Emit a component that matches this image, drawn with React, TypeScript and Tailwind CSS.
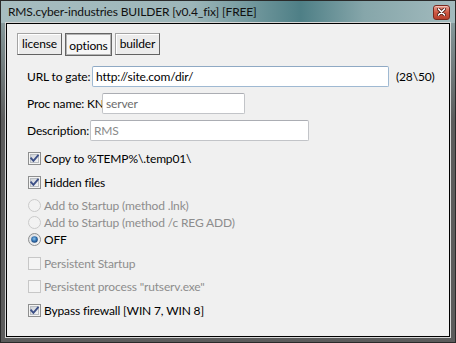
import React from "react";

const font = { fontFamily: 'Lato, "Liberation Sans", Arial, sans-serif' };

function CheckBox({ checked = false, disabled = false }: { checked?: boolean; disabled?: boolean }) {
  return (
    <svg width="13" height="13" viewBox="0 0 13 13" className="shrink-0">
      <defs>
        <linearGradient id="cbInner" x1="0" y1="0" x2="1" y2="1">
          <stop offset="0" stopColor="#cbcfd5" />
          <stop offset="1" stopColor="#f7f7f7" />
        </linearGradient>
      </defs>
      <rect x="0.5" y="0.5" width="12" height="12" fill="#f4f4f4" stroke={disabled ? "#c7c7c7" : "#8e8f8f"} />
      {!disabled && <rect x="2.5" y="2.5" width="8" height="8" fill="url(#cbInner)" stroke="#b9bdc2" />}
      {checked && (
        <path d="M3.2 6.4 L5.4 8.9 L9.9 3.6" stroke="#3c4f86" strokeWidth="1.9" fill="none" strokeLinecap="square" />
      )}
    </svg>
  );
}

function Radio({ checked = false, disabled = false }: { checked?: boolean; disabled?: boolean }) {
  return (
    <svg width="13" height="13" viewBox="0 0 13 13" className="shrink-0">
      <defs>
        <radialGradient id="rbDot" cx="0.45" cy="0.4" r="0.6">
          <stop offset="0" stopColor="#8fc6ee" />
          <stop offset="0.6" stopColor="#2f6fae" />
          <stop offset="1" stopColor="#1c4478" />
        </radialGradient>
        <linearGradient id="rbBg" x1="0" y1="0" x2="1" y2="1">
          <stop offset="0" stopColor="#d8dbe0" />
          <stop offset="1" stopColor="#f8f8f8" />
        </linearGradient>
      </defs>
      <circle cx="6.5" cy="6.5" r="6" fill={disabled ? "#f2f2f2" : "url(#rbBg)"} stroke={disabled ? "#cacaca" : "#8e8f8f"} />
      {checked && <circle cx="6.5" cy="6.5" r="3.3" fill="url(#rbDot)" />}
    </svg>
  );
}

function Option({
  kind,
  label,
  checked,
  disabled,
  className,
}: {
  kind: "check" | "radio";
  label: string;
  checked?: boolean;
  disabled?: boolean;
  className: string;
}) {
  return (
    <div className={`flex h-[13px] items-center gap-[3px] pl-[21px] ${className}`}>
      {kind === "check" ? <CheckBox checked={checked} disabled={disabled} /> : <Radio checked={checked} disabled={disabled} />}
      <span className={`text-[12px] leading-none whitespace-nowrap ${disabled ? "text-[#8d8d8d]" : "text-black"}`}>{label}</span>
    </div>
  );
}

function TabButton({ label, pressed }: { label: string; pressed?: boolean }) {
  return pressed ? (
    <div className="flex h-[23px] w-[47px] items-start justify-center border border-[#646464] bg-[#f6f6f6] pt-[5px] text-[12px] leading-[14px] text-black shadow-[inset_0_0_0_1px_#b4b4b4]">
      {label}
    </div>
  ) : (
    <div className="flex h-[22px] w-[45px] items-center justify-center border border-[#a3a3a3] border-r-[#626262] border-b-[#626262] bg-[#ececec] text-[12px] leading-none text-black shadow-[inset_1px_1px_0_#ffffff]">
      {label}
    </div>
  );
}

export default function App() {
  return (
    <div
      className="flex h-[343px] w-[456px] flex-col border border-[#2a2a2a] bg-[linear-gradient(to_bottom,#93abae_0px,#7d8c8e_40px,#5c5c5c_120px,#5c5c5c_100%)] tracking-[-0.15px]"
      style={font}
    >
      {/* title bar */}
      <div className="flex h-[22px] shrink-0 items-center justify-between bg-[linear-gradient(to_right,#a7bdc0_0%,#9db6b9_42%,#4e7f86_66%,#86a6aa_80%,#a3bbbe_100%)] pl-[7px] pr-[5px]">
        <span className="text-[12px] leading-none text-[#101010] whitespace-nowrap">RMS.cyber-industries BUILDER [v0.4_fix] [FREE]</span>
        <div className="flex h-[15px] w-[17px] items-center justify-center rounded-[3px] border border-[#7b2a1f] bg-gradient-to-b from-[#e69a8b] via-[#cf5a45] to-[#b8402c] shadow-[inset_0_1px_0_#f3c1b6]">
          <svg width="9" height="8" viewBox="0 0 9 8">
            <path d="M1.5 1 L7.5 7 M7.5 1 L1.5 7" stroke="#4a1a12" strokeWidth="3.2" strokeLinecap="round" />
            <path d="M1.5 1 L7.5 7 M7.5 1 L1.5 7" stroke="#ffffff" strokeWidth="1.7" strokeLinecap="round" />
          </svg>
        </div>
      </div>

      {/* frame + client */}
      <div className="flex flex-1 flex-col px-[5px] pb-[5px]">
        <div className="flex flex-1 flex-col border border-black bg-[#f0f0f0] shadow-[0_0_0_1px_#d6d6d6]">
          <div className="mt-[9px] ml-[10px] flex items-start gap-[3px]">
            <TabButton label="license" />
            <TabButton label="options" pressed />
            <TabButton label="builder" />
          </div>

          <div className="mt-[10px] ml-[20px] flex h-[21px] items-center text-[12px] text-black">
            <span className="w-[65px] whitespace-nowrap">URL to gate:</span>
            <div className="flex h-[21px] w-[297px] items-center rounded-[2px] border border-[#9fb9d2] border-t-[#8fa9c4] bg-white pl-[3px]">
              http://site.com/dir/
            </div>
            <span className="ml-[7px]">(28\50)</span>
          </div>

          <div className="mt-[6px] ml-[20px] flex h-[21px] items-center text-[12px] text-black">
            <span className="w-[60px] whitespace-nowrap">Proc name:</span>
            <span className="w-[15px]">KN</span>
            <div className="flex h-[21px] w-[143px] items-center rounded-[2px] border border-[#c2c4c8] border-t-[#abadb3] bg-white pl-[3px] text-[#6d6d6d]">
              server
            </div>
          </div>

          <div className="mt-[6px] ml-[20px] flex h-[21px] items-center text-[12px] text-black">
            <span className="w-[63px] whitespace-nowrap">Description:</span>
            <div className="flex h-[21px] w-[219px] items-center rounded-[2px] border border-[#c2c4c8] border-t-[#abadb3] bg-white pl-[3px] text-[#8a8a8a]">
              RMS
            </div>
          </div>

          <Option kind="check" label="Copy to %TEMP%\.temp01\" checked className="mt-[11px]" />
          <Option kind="check" label="Hidden files" checked className="mt-[11px]" />
          <Option kind="radio" label="Add to Startup (method .lnk)" disabled className="mt-[10px]" />
          <Option kind="radio" label="Add to Startup (method /c REG ADD)" disabled className="mt-[4px]" />
          <Option kind="radio" label="OFF" checked className="mt-[4px]" />
          <Option kind="check" label="Persistent Startup" disabled className="mt-[11px]" />
          <Option kind="check" label={'Persistent process "rutserv.exe"'} disabled className="mt-[10px]" />
          <Option kind="check" label="Bypass firewall [WIN 7, WIN 8]" checked className="mt-[11px]" />
        </div>
      </div>
    </div>
  );
}
